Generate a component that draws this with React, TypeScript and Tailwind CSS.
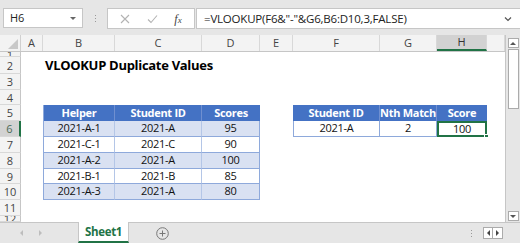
import React from "react";

const COLS = [
  { key: "A", w: 22 },
  { key: "B", w: 72 },
  { key: "C", w: 87 },
  { key: "D", w: 58 },
  { key: "E", w: 33 },
  { key: "F", w: 87 },
  { key: "G", w: 57 },
  { key: "H", w: 50 },
  { key: "I", w: 18 },
];

const ROWS = [
  { n: 1, h: 5 },
  { n: 2, h: 17 },
  { n: 3, h: 16 },
  { n: 4, h: 15 },
  { n: 5, h: 16 },
  { n: 6, h: 16 },
  { n: 7, h: 16 },
  { n: 8, h: 16 },
  { n: 9, h: 15 },
  { n: 10, h: 16 },
  { n: 11, h: 16 },
  { n: 12, h: 6 },
];

const leftData = [
  ["2021-A-1", "2021-A", "95"],
  ["2021-C-1", "2021-C", "90"],
  ["2021-A-2", "2021-A", "100"],
  ["2021-B-1", "2021-B", "85"],
  ["2021-A-3", "2021-A", "80"],
];

const font = { fontFamily: '"Open Sans", "Liberation Sans", sans-serif' };

function Cell({ row, col }: { row: number; col: string }) {
  // left table: B..D, rows 5..10
  if (row >= 5 && row <= 10 && ["B", "C", "D"].includes(col)) {
    const ci = ["B", "C", "D"].indexOf(col);
    const edge = ci === 0 ? "border-l border-l-[#8ea9db]" : "";
    const right = ci === 2 ? "border-r border-r-[#8ea9db]" : "border-r border-r-[#b4c6e7]";
    if (row === 5) {
      const label = ["Helper", "Student ID", "Scores"][ci];
      return (
        <div className={`h-full flex items-center justify-center bg-[#4472c4] text-white font-bold text-[11px] tracking-[-0.3px] ${edge} ${ci < 2 ? "border-r border-r-[#6f8fd0]" : ""}`}>
          {label}
        </div>
      );
    }
    const band = row % 2 === 0 ? "bg-[#d9e1f2]" : "bg-white";
    return (
      <div className={`h-full flex items-center justify-center ${band} text-[#111] text-[11px] tracking-[-0.3px] border-b border-b-[#8ea9db] ${edge} ${right}`}>
        {leftData[row - 6][ci]}
      </div>
    );
  }
  // right table: F..H rows 5..6
  if ((row === 5 || row === 6) && ["F", "G", "H"].includes(col)) {
    const ci = ["F", "G", "H"].indexOf(col);
    if (row === 5) {
      const label = ["Student ID", "Nth Match", "Score"][ci];
      return (
        <div className={`h-full flex items-center justify-center bg-[#4472c4] text-white font-bold text-[11px] tracking-[-0.3px] ${ci < 2 ? "border-r border-r-[#6f8fd0]" : ""}`}>
          {label}
        </div>
      );
    }
    const val = ["2021-A", "2", "100"][ci];
    if (ci === 2) {
      return (
        <div className="relative h-full flex items-center justify-center bg-white text-[#111] text-[11px] tracking-[-0.3px] border-2 border-[#217346]">
          {val}
          <span className="absolute -right-[4px] -bottom-[4px] w-[5px] h-[5px] bg-[#217346] border border-white" />
        </div>
      );
    }
    return (
      <div className={`h-full flex items-center justify-center bg-white text-[#111] text-[11px] tracking-[-0.3px] border-b border-b-[#8ea9db] border-r border-r-[#8ea9db] ${ci === 0 ? "border-l border-l-[#8ea9db]" : ""}`}>
        {val}
      </div>
    );
  }
  if (row === 2 && col === "B") {
    return (
      <div className="relative h-full">
        <span className="absolute left-[2px] top-[0px] leading-[17px] whitespace-nowrap font-bold text-[13px] tracking-[-0.3px] text-black">
          VLOOKUP Duplicate Values
        </span>
      </div>
    );
  }
  return <div className="h-full" />;
}

export default function App() {
  return (
    <div className="w-[520px] h-[243px] overflow-hidden bg-white flex flex-col" style={font}>
      {/* formula bar */}
      <div className="h-[35px] shrink-0 bg-[#e6e6e6] flex items-start pt-[8px] pl-[3px]">
        <div className="w-[80px] h-[20px] bg-white border border-[#c6c6c6] flex items-center justify-between px-[6px] text-[11px] text-[#222]">
          <span>H6</span>
          <span className="w-0 h-0 border-l-[3px] border-r-[3px] border-t-[3px] border-l-transparent border-r-transparent border-t-[#666]" />
        </div>
        <div className="w-[24px] h-[20px] flex flex-col items-center justify-center gap-[2px]">
          <span className="w-[1px] h-[1px] bg-[#999]" />
          <span className="w-[1px] h-[1px] bg-[#999]" />
          <span className="w-[1px] h-[1px] bg-[#999]" />
        </div>
        <div className="w-[88px] h-[21px] bg-white border border-[#c6c6c6] flex items-center justify-around px-[4px] text-[#b3b3b3]">
          <svg width="10" height="10" viewBox="0 0 10 10"><path d="M1 1 L9 9 M9 1 L1 9" stroke="#b3b3b3" strokeWidth="1.1" /></svg>
          <svg width="11" height="10" viewBox="0 0 11 10"><path d="M1 5.5 L4 8.5 L10 1.5" stroke="#b3b3b3" strokeWidth="1.1" fill="none" /></svg>
          <span className="italic text-[12px] text-[#444]" style={{ fontFamily: '"Liberation Serif", serif' }}>f<span className="text-[9px]">x</span></span>
        </div>
        <div className="flex-1 h-[21px] ml-[1px] bg-white border border-[#c6c6c6] border-r-0 flex items-center justify-between pl-[7px] pr-[8px] text-[11.5px] text-[#222] tracking-[-0.2px]">
          <span>=VLOOKUP(F6&amp;"-"&amp;G6,B6:D10,3,FALSE)</span>
          <svg width="8" height="6" viewBox="0 0 8 6"><path d="M1 1.5 L4 4.5 L7 1.5" stroke="#555" strokeWidth="1.2" fill="none" /></svg>
        </div>
      </div>

      <div className="flex flex-1 min-h-0">
        {/* grid */}
        <div className="flex flex-col flex-1 min-w-0">
          {/* column headers */}
          <div className="h-[17px] shrink-0 flex bg-[#f3f3f3] border-b border-[#c6c6c6] text-[11px] text-[#444]">
            <div className="w-[21px] shrink-0 relative border-r border-[#d0d0d0]">
              <svg className="absolute right-[2px] bottom-[2px]" width="10" height="10" viewBox="0 0 10 10"><path d="M10 0 L10 10 L0 10 Z" fill="#c8c8c8" /></svg>
            </div>
            {COLS.map((c) => (
              <div
                key={c.key}
                style={{ width: c.w }}
                className={`shrink-0 flex items-center justify-center border-r border-[#d8d8d8] ${c.key === "H" ? "bg-[#d2d2d2] border-b-2 border-b-[#217346] text-[#333]" : ""}`}
              >
                {c.key === "I" ? "" : c.key}
              </div>
            ))}
          </div>
          {/* rows */}
          <div className="flex-1 min-h-0 overflow-hidden">
            {ROWS.map((r) => (
              <div key={r.n} className="flex overflow-hidden" style={{ height: r.h }}>
                <div
                  className={`w-[21px] shrink-0 flex items-center justify-center overflow-hidden leading-none text-[11px] border-b border-[#d8d8d8] ${r.n === 6 ? "bg-[#d2d2d2] text-[#4d6b57] border-r-2 border-r-[#217346]" : "bg-[#f3f3f3] text-[#444] border-r border-r-[#c6c6c6]"}`}
                >
                  {r.n}
                </div>
                {COLS.map((c) => (
                  <div key={c.key} style={{ width: c.w }} className="shrink-0 h-full">
                    <Cell row={r.n} col={c.key} />
                  </div>
                ))}
              </div>
            ))}
          </div>
        </div>
        {/* vertical scrollbar */}
        <div className="w-[15px] shrink-0 bg-[#e6e6e6] border-l border-[#c6c6c6] flex flex-col items-center pt-[3px] pb-[1px]">
          <div className="w-[11px] h-[10px] bg-white border border-[#ababab] flex items-center justify-center">
            <span className="w-0 h-0 border-l-[3px] border-r-[3px] border-b-[3px] border-l-transparent border-r-transparent border-b-[#555]" />
          </div>
          <div className="w-[11px] h-[60px] mt-[1px] bg-white border border-[#ababab]" />
          <div className="flex-1" />
          <div className="w-[11px] h-[10px] bg-white border border-[#ababab] flex items-center justify-center">
            <span className="w-0 h-0 border-l-[3px] border-r-[3px] border-t-[3px] border-l-transparent border-r-transparent border-t-[#555]" />
          </div>
        </div>
      </div>

      {/* sheet tabs */}
      <div className="h-[21px] shrink-0 bg-[#e6e6e6] border-t border-[#c6c6c6] flex items-stretch">
        <div className="w-[78px] flex items-center gap-[16px] pl-[20px] text-[#c0c0c0]">
          <span className="w-0 h-0 border-t-[3px] border-b-[3px] border-r-[3px] border-t-transparent border-b-transparent border-r-[#bdbdbd]" />
          <span className="w-0 h-0 border-t-[3px] border-b-[3px] border-l-[3px] border-t-transparent border-b-transparent border-l-[#bdbdbd]" />
        </div>
        <div className="w-[51px] -mt-[1px] bg-white border-x border-[#c6c6c6] border-b-2 border-b-[#217346] flex items-center justify-center text-[11.5px] font-bold text-[#217346] tracking-[-0.3px]">
          Sheet1
        </div>
        <div className="w-[66px] flex items-center justify-center">
          <svg width="13" height="13" viewBox="0 0 13 13">
            <circle cx="6.5" cy="6.5" r="5.8" fill="none" stroke="#777" strokeWidth="1" />
            <path d="M6.5 3.5 V9.5 M3.5 6.5 H9.5" stroke="#777" strokeWidth="1" />
          </svg>
        </div>
        <div className="flex-1" />
        <div className="flex flex-col justify-center gap-[2px] mr-[11px]">
          <span className="w-[1px] h-[1px] bg-[#999]" />
          <span className="w-[1px] h-[1px] bg-[#999]" />
          <span className="w-[1px] h-[1px] bg-[#999]" />
        </div>
        <div className="flex items-center mr-[17px]">
          <div className="w-[10px] h-[12px] bg-white border border-[#ababab] flex items-center justify-center">
            <span className="w-0 h-0 border-t-[3px] border-b-[3px] border-r-[3px] border-t-transparent border-b-transparent border-r-[#444]" />
          </div>
          <div className="w-[10px] h-[12px] bg-white border border-l-0 border-[#ababab] flex items-center justify-center">
            <span className="w-0 h-0 border-t-[3px] border-b-[3px] border-l-[3px] border-t-transparent border-b-transparent border-l-[#444]" />
          </div>
        </div>
      </div>
    </div>
  );
}
